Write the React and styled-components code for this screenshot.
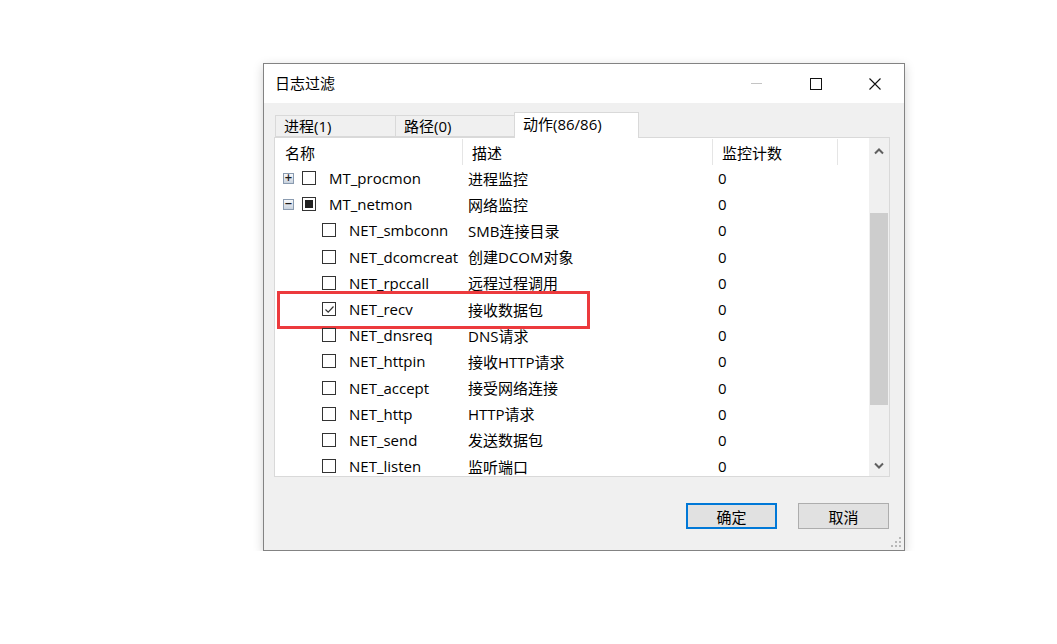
import React from "react";
import styled, { createGlobalStyle } from "styled-components";

const GlobalStyle = createGlobalStyle`
  body {
    margin: 0;
    background: #ffffff;
    font-family: "Open Sans", "Noto Sans CJK SC", sans-serif;
    color: #000;
  }
`;

const rows = [
  { name: "MT_procmon", desc: "进程监控", level: 0, expander: "plus", check: "none" },
  { name: "MT_netmon", desc: "网络监控", level: 0, expander: "minus", check: "partial" },
  { name: "NET_smbconn", desc: "SMB连接目录", level: 1, check: "none" },
  { name: "NET_dcomcreat", desc: "创建DCOM对象", level: 1, check: "none" },
  { name: "NET_rpccall", desc: "远程过程调用", level: 1, check: "none" },
  { name: "NET_recv", desc: "接收数据包", level: 1, check: "checked", highlight: true },
  { name: "NET_dnsreq", desc: "DNS请求", level: 1, check: "none" },
  { name: "NET_httpin", desc: "接收HTTP请求", level: 1, check: "none" },
  { name: "NET_accept", desc: "接受网络连接", level: 1, check: "none" },
  { name: "NET_http", desc: "HTTP请求", level: 1, check: "none" },
  { name: "NET_send", desc: "发送数据包", level: 1, check: "none" },
  { name: "NET_listen", desc: "监听端口", level: 1, check: "none" },
];

const tabs = [
  { label: "进程(1)", width: 121 },
  { label: "路径(0)", width: 120 },
  { label: "动作(86/86)", width: 125, active: true },
];

function Chevron({ down }) {
  return (
    <svg width="10" height="7" viewBox="0 0 10 7">
      <path
        d={down ? "M1 1.5 L5 5.5 L9 1.5" : "M1 5.5 L5 1.5 L9 5.5"}
        fill="none"
        stroke="#606060"
        strokeWidth="2"
      />
    </svg>
  );
}

function CheckBox({ state }) {
  return (
    <Check>
      {state === "partial" && <Partial />}
      {state === "checked" && (
        <svg width="11" height="11" viewBox="0 0 11 11">
          <path d="M1.5 5.5 L4.2 8.2 L9.5 2.5" fill="none" stroke="#333" strokeWidth="1.2" />
        </svg>
      )}
    </Check>
  );
}

export default function App() {
  return (
    <>
      <GlobalStyle />
      <Page>
        <Dialog>
          <TitleBar>
            <Title>日志过滤</Title>
            <Controls>
              <ControlButton>
                <svg width="11" height="11" viewBox="0 0 11 11">
                  <path d="M0 5.5 H11" stroke="#c4c4c4" strokeWidth="1" />
                </svg>
              </ControlButton>
              <ControlButton>
                <svg width="12" height="12" viewBox="0 0 12 12">
                  <rect x="0.5" y="0.5" width="11" height="11" fill="none" stroke="#111" />
                </svg>
              </ControlButton>
              <ControlButton>
                <svg width="12" height="12" viewBox="0 0 12 12">
                  <path d="M0.5 0.5 L11.5 11.5 M11.5 0.5 L0.5 11.5" stroke="#111" strokeWidth="1.1" />
                </svg>
              </ControlButton>
            </Controls>
          </TitleBar>

          <Body>
            <TabStrip>
              {tabs.map((t) => (
                <Tab key={t.label} $active={t.active} $width={t.width}>
                  {t.label}
                </Tab>
              ))}
            </TabStrip>

            <ListBox>
              <ListMain>
                <HeaderRow>
                  <HeaderCell>名称</HeaderCell>
                  <HeaderCell>描述</HeaderCell>
                  <HeaderCell>监控计数</HeaderCell>
                  <div />
                </HeaderRow>
                {rows.map((r) => (
                  <Row key={r.name} $highlight={r.highlight}>
                    <NameCell $indent={r.level === 0 ? 8 : 47}>
                      {r.expander && <Expander>{r.expander === "plus" ? "+" : "−"}</Expander>}
                      <CheckBox state={r.check} />
                      <NameText>{r.name}</NameText>
                    </NameCell>
                    <Cell>{r.desc}</Cell>
                    <Cell>0</Cell>
                  </Row>
                ))}
              </ListMain>
              <ScrollBar>
                <ArrowButton $h={26}>
                  <Chevron />
                </ArrowButton>
                <Track>
                  <Thumb style={{ marginTop: 49, height: 192 }} />
                </Track>
                <ArrowButton $h={21}>
                  <Chevron down />
                </ArrowButton>
              </ScrollBar>
            </ListBox>

            <Footer>
              <Button $primary>确定</Button>
              <Button>取消</Button>
            </Footer>
          </Body>

          <Grip>
            <svg width="10" height="10" viewBox="0 0 10 10">
              {[
                [8, 0], [8, 4], [4, 4], [8, 8], [4, 8], [0, 8],
              ].map(([x, y]) => (
                <rect key={`${x}-${y}`} x={x} y={y} width="2" height="2" fill="#b8b8b8" />
              ))}
            </svg>
          </Grip>
        </Dialog>
      </Page>
    </>
  );
}

const Page = styled.div`
  padding: 63px 0 0 263px;
`;

const Dialog = styled.div`
  position: relative;
  width: 642px;
  height: 488px;
  box-sizing: border-box;
  border: 1px solid #838383;
  background: #f0f0f0;
  display: flex;
  flex-direction: column;
  box-shadow: 0 3px 10px rgba(0, 0, 0, 0.18);
  font-size: 15px;
`;

const TitleBar = styled.div`
  height: 39px;
  background: #fff;
  display: flex;
  align-items: center;
`;

const Title = styled.div`
  padding: 0 0 3px 11px;
  font-size: 15px;
`;

const Controls = styled.div`
  margin-left: auto;
  display: flex;
  height: 100%;
`;

const ControlButton = styled.div`
  width: 59px;
  height: 100%;
  display: flex;
  align-items: center;
  justify-content: center;
`;

const Body = styled.div`
  flex: 1;
  display: flex;
  flex-direction: column;
  padding: 9px 13px 0 10px;
`;

const TabStrip = styled.div`
  display: flex;
  align-items: flex-end;
  height: 25px;
  padding-left: 1px;
  position: relative;
  z-index: 1;
`;

const Tab = styled.div`
  box-sizing: border-box;
  width: ${(p) => p.$width}px;
  height: ${(p) => (p.$active ? 26 : 22)}px;
  margin-left: -1px;
  margin-bottom: ${(p) => (p.$active ? -1 : 0)}px;
  border: 1px solid #d9d9d9;
  border-bottom: ${(p) => (p.$active ? "none" : "1px solid #d9d9d9")};
  background: ${(p) => (p.$active ? "#fff" : "#f0f0f0")};
  padding-left: 8px;
  display: flex;
  align-items: center;
  padding-bottom: ${(p) => (p.$active ? 4 : 1)}px;
  &:first-child {
    margin-left: 0;
  }
`;

const ListBox = styled.div`
  box-sizing: border-box;
  width: 616px;
  height: 340px;
  border: 1px solid #d9d9d9;
  background: #fff;
  display: flex;
`;

const ListMain = styled.div`
  flex: 1;
  overflow: hidden;
  position: relative;
`;

const columns = "188px 250px 125px 1fr";

const HeaderRow = styled.div`
  display: grid;
  grid-template-columns: ${columns};
  height: 27px;
`;

const HeaderCell = styled.div`
  box-sizing: border-box;
  height: 26px;
  margin-top: 1px;
  border-right: 1px solid #e5e5e5;
  padding-left: 9px;
  display: flex;
  align-items: center;
  &:first-child {
    padding-left: 10px;
  }
`;

const Row = styled.div`
  position: relative;
  display: grid;
  grid-template-columns: ${columns};
  height: 26.2px;
  align-items: center;
  &::after {
    content: "";
    display: ${(p) => (p.$highlight ? "block" : "none")};
    position: absolute;
    left: 2px;
    top: -5px;
    width: 313px;
    height: 38px;
    box-sizing: border-box;
    border: 3px solid #ec3a3d;
  }
`;

const NameCell = styled.div`
  display: flex;
  align-items: center;
  padding-left: ${(p) => p.$indent}px;
  overflow: hidden;
  white-space: nowrap;
`;

const NameText = styled.span`
  margin-left: 13px;
`;

const Cell = styled.div`
  padding-left: 5px;
  white-space: nowrap;
  overflow: hidden;
`;

const Expander = styled.div`
  box-sizing: border-box;
  width: 11px;
  height: 11px;
  margin-right: 8px;
  border: 1px solid #8a9bb0;
  background: linear-gradient(#f7f9fb, #c8d2de);
  display: flex;
  align-items: center;
  justify-content: center;
  font-family: "DejaVu Sans", sans-serif;
  font-size: 10px;
  font-weight: bold;
  line-height: 1;
  color: #1c1c1c;
`;

const Check = styled.div`
  box-sizing: border-box;
  width: 14px;
  height: 14px;
  flex: none;
  border: 1px solid #333;
  background: #fff;
  display: flex;
  align-items: center;
  justify-content: center;
`;

const Partial = styled.div`
  width: 8px;
  height: 8px;
  background: #222;
`;

const ScrollBar = styled.div`
  width: 20px;
  background: #f0f0f0;
  display: flex;
  flex-direction: column;
`;

const ArrowButton = styled.div`
  height: ${(p) => p.$h}px;
  display: flex;
  align-items: center;
  justify-content: center;
`;

const Track = styled.div`
  flex: 1;
  display: flex;
  flex-direction: column;
  align-items: center;
`;

const Thumb = styled.div`
  width: 18px;
  background: #cdcdcd;
`;

const Footer = styled.div`
  display: flex;
  justify-content: flex-end;
  gap: 21px;
  padding: 26px 2px 0 0;
`;

const Button = styled.div`
  box-sizing: border-box;
  width: 91px;
  height: 26px;
  background: #e1e1e1;
  border: ${(p) => (p.$primary ? "2px solid #0078d7" : "1px solid #adadad")};
  display: flex;
  align-items: center;
  justify-content: center;
`;

const Grip = styled.div`
  position: absolute;
  right: 3px;
  bottom: 3px;
  line-height: 0;
`;
